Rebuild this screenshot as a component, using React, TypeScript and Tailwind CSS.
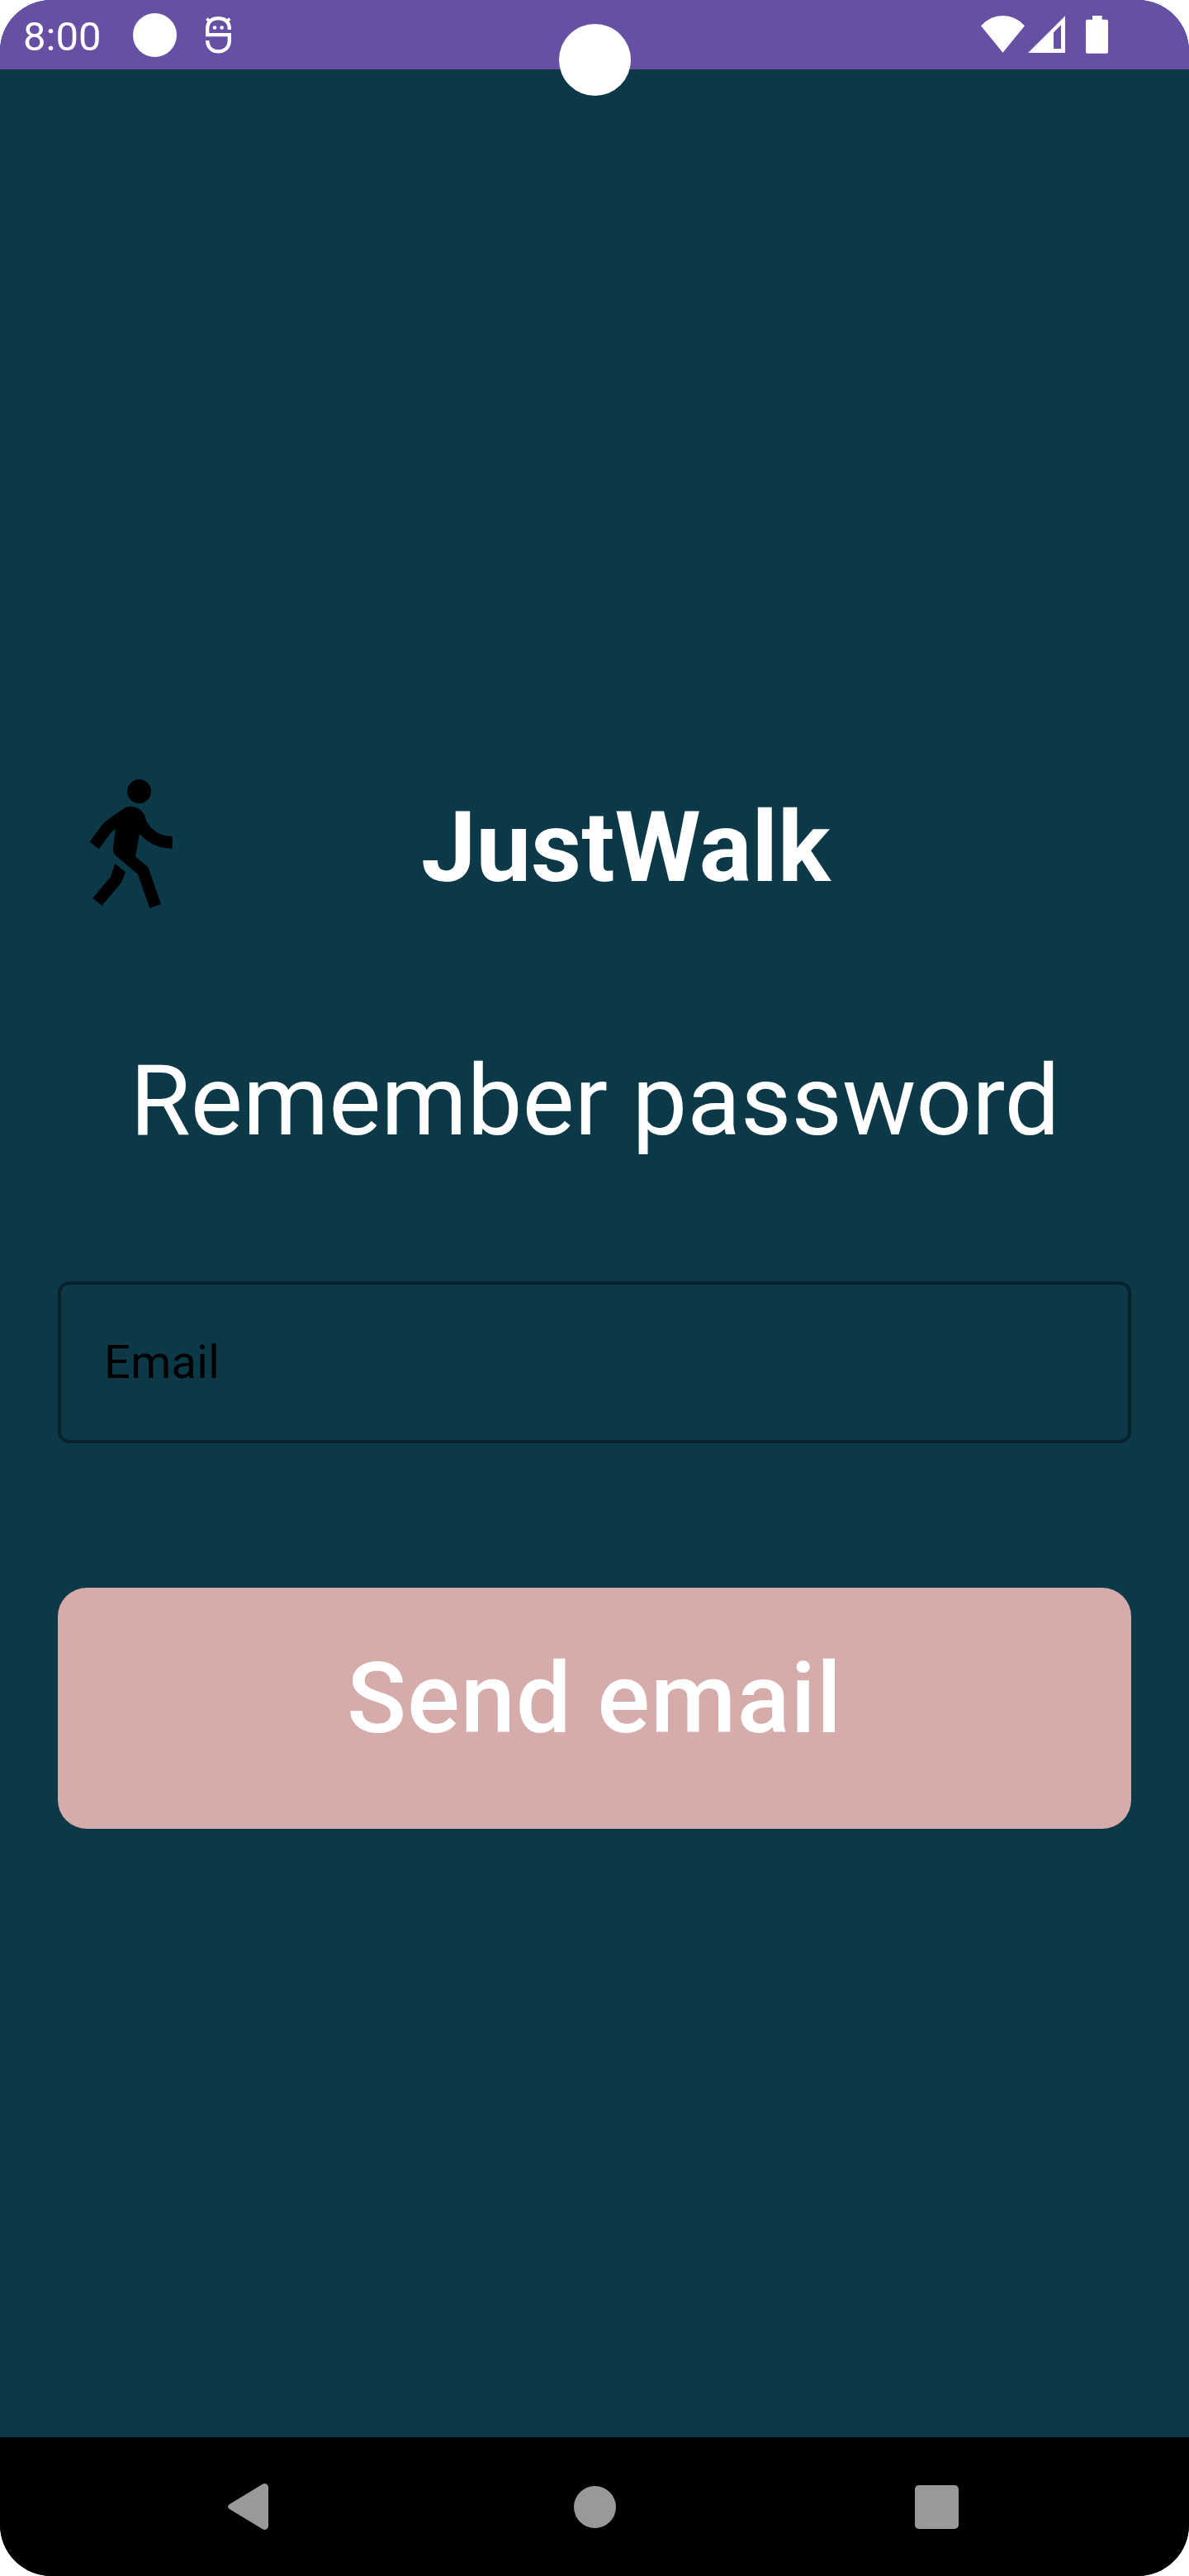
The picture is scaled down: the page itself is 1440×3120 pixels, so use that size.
import React from "react";

function StatusBar() {
  return (
    <header className="relative flex h-[84px] shrink-0 items-start bg-[#6750a3] text-white">
      <span className="ml-[28px] mt-[16px] w-[133px] text-[49px] leading-[58px]">8:00</span>
      <span className="mt-[15.5px] h-[53px] w-[53px] rounded-full bg-white" />
      <svg className="ml-[32px] mt-[16px]" width="42" height="52" viewBox="738 48 126 156" fill="none" stroke="white" strokeWidth="13">
        <path d="M833.500 108 V103 C833.500 80 817 66.500 793.500 66.500 C770 66.500 753.500 80 753.500 103 V126.500 H833.500 V147 C833.500 172 817 187 793.500 187 C770 187 753.500 172 753.500 147" />
        <path d="M751 68 L764 79 M835 68 L822 79" strokeWidth="11" />
        <circle cx="780" cy="100.500" r="7" fill="white" stroke="none" />
        <circle cx="806" cy="100.500" r="7" fill="white" stroke="none" />
      </svg>
      <svg className="ml-auto mr-[96px] mt-[18px]" width="162" height="48" viewBox="126 54 486 144" fill="white">
        <path d="M144 93.500 Q178 57 223.500 57 Q269 57 303 93.500 L223.500 191 Z" />
        <path fillRule="evenodd" d="M450 58 V192 H315 Z M408 118 V177 H435 V91 Z" />
        <path d="M549 57 H584 V71 H600 Q606 71 606 77 V188 Q606 194 600 194 H531 Q525 194 525 188 V77 Q525 71 531 71 H549 Z" />
      </svg>
      <span className="absolute left-[677px] top-[29px] h-[87px] w-[87px] rounded-full bg-white" />
    </header>
  );
}

function WalkIcon() {
  return (
    <svg className="ml-[10px] shrink-0" width="160" height="200" viewBox="0 0 480 600">
      <circle cx="265.500" cy="115.500" r="43.500" />
      <path d="M86 299 L132 236 Q136 230 142 226 L206 180 Q219 170 235 170 C260 170 281 187 287 208 C297 249 337 279 386 279 V323 C338 323 297 304 267 269 L252 353 L295 388 Q298 390 300 395 L345 525 L304 540 L261 417 L182 350 Q170 339 171 321 L180 252 Q168 259 160 270 L119 325 Z" />
      <path d="M178 378 L216 409 L205 438 Q202 446 196 453 L130 531 L97 503 L162 426 Z" />
    </svg>
  );
}

function NavigationBar() {
  return (
    <nav className="flex h-[168px] shrink-0 items-center bg-black">
      <svg className="ml-[275px]" width="51" height="58" viewBox="0 0 51 58" fill="#999999">
        <path d="M43.500 1.500 Q45.500 .6 47.500 1.500 Q50 2.500 50 5.500 V52.500 Q50 55.500 47.500 56.500 Q45.500 57.400 43.500 56.500 L3 32 Q1 30.500 1 29 Q1 27.500 3 26 Z" />
      </svg>
      <span className="ml-[368.5px] h-[51px] w-[51px] rounded-full bg-[#999999]" />
      <span className="ml-[362.5px] h-[53px] w-[53px] rounded-[5px] bg-[#999999]" />
    </nav>
  );
}

export default function App() {
  return (
    <div className="h-[3120px] w-[1440px] bg-white">
      <div className="flex h-full flex-col overflow-hidden rounded-[62px] bg-[#0c3948] font-['Roboto',sans-serif]">
        <StatusBar />
        <main className="flex grow flex-col px-[70px] pt-[836px] text-white">
          <div className="flex h-[200px] items-center">
            <WalkIcon />
            <h1 className="ml-[270px] mt-[14px] text-[119px] font-bold leading-[140px]">JustWalk</h1>
          </div>
          <h2 className="mt-[144px] pl-px text-center text-[119px] leading-[140px]">Remember password</h2>
          <input
            className="mt-[148px] h-[196px] rounded-[14px] border-4 border-[#08222b] bg-transparent px-[52px] text-[56px] tracking-[0.3px] text-black outline-none placeholder:text-black placeholder:opacity-100"
            placeholder="Email"
            aria-label="Email"
          />
          <button className="mt-[175px] flex h-[292px] items-start justify-center rounded-[35px] bg-[#d5acaa] pt-[65px] text-[119px] font-medium leading-[140px] tracking-[0.9px]">
            Send email
          </button>
        </main>
        <NavigationBar />
      </div>
    </div>
  );
}
